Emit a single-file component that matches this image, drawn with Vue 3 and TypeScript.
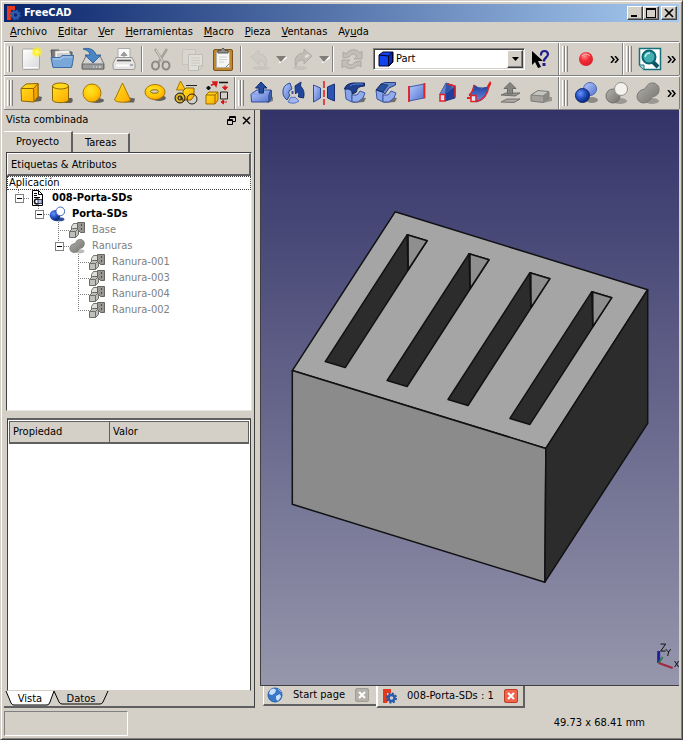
<script setup lang="ts">
import { ref } from 'vue'

interface Tool {
  icon: string
  label: string
  kind?: 'sep' | 'menu' | 'combo'
  disabled?: boolean
}
interface Toolbar {
  name: string
  grow?: boolean
  more?: boolean
  tools: Tool[]
}
interface Row {
  label: string
  icon: string
  guides: string[]
  bold?: boolean
  hidden?: boolean
  open?: boolean
}

const menus = [
  ['A', 'rchivo'],
  ['E', 'ditar'],
  ['V', 'er'],
  ['H', 'erramientas'],
  ['M', 'acro'],
  ['P', 'ieza'],
  ['V', 'entanas'],
]

const sep: Tool = { icon: '', label: '', kind: 'sep' }

const rows: Toolbar[][] = [
  [
    {
      name: 'Archivo',
      grow: true,
      tools: [
        { icon: 'new', label: 'Nuevo' },
        { icon: 'open', label: 'Abrir' },
        { icon: 'save', label: 'Guardar' },
        { icon: 'print', label: 'Imprimir' },
        sep,
        { icon: 'scissors', label: 'Cortar', disabled: true },
        { icon: 'copy', label: 'Copiar', disabled: true },
        { icon: 'paste', label: 'Pegar' },
        sep,
        { icon: 'undo', label: 'Deshacer', kind: 'menu', disabled: true },
        { icon: 'redo', label: 'Rehacer', kind: 'menu', disabled: true },
        sep,
        { icon: 'refresh', label: 'Actualizar', disabled: true },
        { icon: '', label: 'Banco de trabajo', kind: 'combo' },
        { icon: 'help', label: 'Ayuda contextual' },
      ],
    },
    { name: 'Macro', more: true, tools: [{ icon: 'record', label: 'Grabar macro' }] },
    { name: 'Ver', more: true, tools: [{ icon: 'fit', label: 'Ajustar todo' }] },
  ],
  [
    {
      name: 'Sólidos',
      tools: [
        { icon: 'box', label: 'Cubo' },
        { icon: 'cylinder', label: 'Cilindro' },
        { icon: 'sphere', label: 'Esfera' },
        { icon: 'cone', label: 'Cono' },
        { icon: 'torus', label: 'Toro' },
        { icon: 'primitives', label: 'Primitivas' },
        { icon: 'builder', label: 'Constructor de formas' },
      ],
    },
    {
      name: 'Herramientas de pieza',
      grow: true,
      tools: [
        { icon: 'extrude', label: 'Extruir' },
        { icon: 'revolve', label: 'Revolución' },
        { icon: 'mirror', label: 'Simetría' },
        { icon: 'fillet', label: 'Redondeo' },
        { icon: 'chamfer', label: 'Chaflán' },
        { icon: 'ruled', label: 'Superficie reglada' },
        { icon: 'loft', label: 'Proyección' },
        { icon: 'sweep', label: 'Barrido' },
        { icon: 'offset', label: 'Desfase', disabled: true },
        { icon: 'thickness', label: 'Espesor', disabled: true },
      ],
    },
    {
      name: 'Operaciones booleanas',
      more: true,
      tools: [
        { icon: 'boolean', label: 'Booleana' },
        { icon: 'cut', label: 'Cortar', disabled: true },
        { icon: 'fuse', label: 'Unión', disabled: true },
      ],
    },
  ],
]

const tree: Row[] = [
  { label: '008-Porta-SDs', icon: 'doc', guides: ['end'], bold: true, open: true },
  { label: 'Porta-SDs', icon: 'cutresult', guides: ['', 'end'], bold: true, open: true },
  { label: 'Base', icon: 'part', guides: ['', '', 'tee'], hidden: true },
  { label: 'Ranuras', icon: 'fuse', guides: ['', '', 'end'], hidden: true, open: true },
  { label: 'Ranura-001', icon: 'part', guides: ['', '', '', 'tee'], hidden: true },
  { label: 'Ranura-003', icon: 'part', guides: ['', '', '', 'tee'], hidden: true },
  { label: 'Ranura-004', icon: 'part', guides: ['', '', '', 'tee'], hidden: true },
  { label: 'Ranura-002', icon: 'part', guides: ['', '', '', 'end'], hidden: true },
]

const slots = [
  [407, 235],
  [469, 254],
  [530, 273],
  [592, 292],
]

const workbench = ref('Part')
</script>

<template>
  <div class="window">
    <svg class="defs" width="0" height="0" aria-hidden="true">
      <defs>
        <linearGradient id="gold" x1="0" y1="0" x2="1" y2="1">
          <stop offset="0" stop-color="#ffe020" /><stop offset="1" stop-color="#ffa800" />
        </linearGradient>
        <linearGradient id="navy" x1="0" y1="0" x2="1" y2="1">
          <stop offset="0" stop-color="#7da2f2" /><stop offset="1" stop-color="#14389c" />
        </linearGradient>
        <linearGradient id="deep" x1="0" y1="0" x2="0" y2="1">
          <stop offset="0" stop-color="#1c3c9c" /><stop offset="1" stop-color="#6c8ce4" />
        </linearGradient>
        <linearGradient id="pale" x1="0" y1="0" x2="1" y2="1">
          <stop offset="0" stop-color="#b8cbff" /><stop offset="1" stop-color="#5273cc" />
        </linearGradient>
        <linearGradient id="ash" x1="0" y1="0" x2="1" y2="1">
          <stop offset="0" stop-color="#b4b2ac" /><stop offset="1" stop-color="#72716d" />
        </linearGradient>
        <linearGradient id="paper" x1="0" y1="0" x2="1" y2="1">
          <stop offset="0" stop-color="#ffffff" /><stop offset="1" stop-color="#d8d8d8" />
        </linearGradient>
        <radialGradient id="sun">
          <stop offset="0" stop-color="#ffffb0" /><stop offset=".45" stop-color="#ffee20" /><stop offset="1" stop-color="#ffee20" stop-opacity="0" />
        </radialGradient>
        <radialGradient id="goldball" cx=".4" cy=".35" r=".75">
          <stop offset="0" stop-color="#ffe428" /><stop offset=".5" stop-color="#ffcc08" /><stop offset="1" stop-color="#ff9c00" />
        </radialGradient>
        <radialGradient id="blueball" cx=".35" cy=".35" r=".7">
          <stop offset="0" stop-color="#6c94fc" /><stop offset=".5" stop-color="#2452c4" /><stop offset="1" stop-color="#08226c" />
        </radialGradient>
        <radialGradient id="redball" cx=".4" cy=".3" r=".7">
          <stop offset="0" stop-color="#ff9090" /><stop offset=".5" stop-color="#f02c34" /><stop offset="1" stop-color="#dc2028" />
        </radialGradient>
      </defs>

      <symbol id="i-new" viewBox="0 0 24 24">
        <rect x="3.500" y="2" width="17" height="20.500" rx="1" fill="url(#paper)" stroke="#a8a8a6" />
        <path d="M5 4h9M5 20.500h14" stroke="#fff" />
        <circle cx="18" cy="5" r="6" fill="url(#sun)" />
      </symbol>
      <symbol id="i-open" viewBox="0 0 24 24">
        <path d="M1 3h8l1 2h12v14H3z" fill="#77797a" stroke="#555" />
        <path d="M5 4l14-1 2 8H5z" fill="#f2f2f0" stroke="#999" stroke-width=".7" />
        <path d="M7 7h12M7 9h12" stroke="#aaa" />
        <path d="M1 10.500h9l2-2h12l-2.500 12H3z" fill="#78a7d8" stroke="#3a6da8" />
        <path d="M3 12h8l2-2h9" stroke="#b4d0ee" fill="none" />
      </symbol>
      <symbol id="i-save" viewBox="0 0 24 24">
        <path d="M5 9h14l4 8v5H1v-5z" fill="#d4d4d2" stroke="#6e6e6c" />
        <path d="M1.500 17h21v5h-21z" fill="#9c9e9e" stroke="#6e6e6c" />
        <path d="M12 20h1M15 20h1M18 20h2" stroke="#eee" />
        <path d="M2 2c6-2 12 1 13 6h5l-8 8-8-8h5C9 5 6 3 2 2z" fill="#4a86c4" stroke="#1f5590" stroke-width=".8" />
      </symbol>
      <symbol id="i-print" viewBox="0 0 24 24">
        <path d="M6 1.500h12V13H6z" fill="#fafafa" stroke="#aaa" />
        <path d="M12 11V6m-3 2.500L12 5l3 3.500z" fill="#999" stroke="#999" />
        <path d="M4 10.500h16l3 6v4q0 2-2 2H3q-2 0-2-2v-4z" fill="#e4e4e2" stroke="#989896" />
        <path d="M5 13.500h14" stroke="#555" stroke-width="1.500" />
        <path d="M4 18.500h13" stroke="#fff" stroke-width="2" /><path d="M18 18h3" stroke="#777" />
      </symbol>
      <symbol id="i-scissors" viewBox="0 0 24 24">
        <path d="M6 2l9 14M18 2L9 16" stroke="#a5a29b" stroke-width="2.500" fill="none" />
        <path d="M7 3l7 12" stroke="#d9d7d0" />
        <ellipse cx="6.500" cy="18.500" rx="3.500" ry="4" fill="none" stroke="#8d8a84" stroke-width="2" />
        <ellipse cx="17" cy="18.500" rx="3.500" ry="4" fill="none" stroke="#8d8a84" stroke-width="2" />
      </symbol>
      <symbol id="i-copy" viewBox="0 0 24 24">
        <path d="M2.500 2.500h13v15h-13z" fill="#d9d6cf" stroke="#c6c3bc" />
        <path d="M8.500 7.500h14v12l-4 4h-10z" fill="#e0ded8" stroke="#bfbcb5" />
        <path d="M11 11h9M11 13.500h9M11 16h9M11 18.500h6" stroke="#cbc8c1" />
        <path d="M18.500 23v-4h4" fill="none" stroke="#b3b0a9" />
      </symbol>
      <symbol id="i-paste" viewBox="0 0 24 24">
        <rect x="2.500" y="2.500" width="19" height="21" rx="1.500" fill="#c0872e" stroke="#7b531b" />
        <path d="M5.500 5.500h13v15h-13z" fill="#f5f5f3" stroke="#b5b5b0" />
        <path d="M8 10h8M8 12.500h8M8 15h5" stroke="#d2d2d0" />
        <path d="M7 6V3.500h3Q12-1 14 3.500h3V6z" fill="#8e908c" stroke="#555" />
        <path d="M14.500 20.500l4-4" stroke="#888" />
      </symbol>
      <symbol id="i-undo" viewBox="0 0 24 24">
        <path d="M3 10l8-7v4c7 0 9 6 6 14 0-5-2-7-6-7v4z" fill="#cdcac3" stroke="#c4c1ba" />
        <ellipse cx="13" cy="21" rx="9" ry="2" fill="#c8c5be" />
      </symbol>
      <symbol id="i-redo" viewBox="0 0 24 24">
        <path d="M21 9l-8-7v4c-7 0-11 6-8 14 0-5 3-7 8-7v4z" fill="#c0bdb6" stroke="#b0ada6" />
        <path d="M14 10l4-2" stroke="#e3e1dc" stroke-width="2" />
        <ellipse cx="9" cy="21" rx="7" ry="2" fill="#c6c3bc" />
      </symbol>
      <symbol id="i-refresh" viewBox="0 0 24 24">
        <path d="M3 11V5l3 2c4-6 11-5 14-1l2-2v8h-8l3-3c-3-3-6-2-8 1z" fill="#c2bfb8" stroke="#aba8a2" />
        <path d="M21 14v6l-3-2c-4 5-11 4-14 1l-2 2v-8h8l-3 3c3 3 6 2 8-1z" fill="#c2bfb8" stroke="#aba8a2" />
      </symbol>
      <symbol id="i-help" viewBox="0 0 24 24">
        <path d="M3 4v14l3-3 3 6 3-1-3-6h5z" fill="#000" />
        <path d="M12 8.500V7q.5-3 3.500-3T19 7q0 2-2 3.500t-2 4" fill="none" stroke="#1c1c8c" stroke-width="2.200" />
        <path d="M13.500 16h3v3h-3z" fill="#1c1c8c" />
      </symbol>
      <symbol id="i-record" viewBox="0 0 24 24"><circle cx="12" cy="12" r="7" fill="url(#redball)" /><path d="M8 9q4-4 8 0" stroke="#ffb4b4" fill="none" /></symbol>
      <symbol id="i-fit" viewBox="0 0 24 24">
        <path d="M1.500 1.500h21v21H6l-4.500-4.500z" fill="#fff" stroke="#17707c" stroke-width="1.500" />
        <path d="M1.500 18H6v4.500" fill="#b7e2e4" stroke="#17707c" />
        <path d="M14 14l6 6" stroke="#0c5460" stroke-width="4" />
        <circle cx="11" cy="10" r="6.500" fill="#43aeb2" stroke="#0c6470" stroke-width="2" />
        <path d="M7 10q1-4 5-4" stroke="#c4f0f0" stroke-width="1.500" fill="none" />
      </symbol>

      <symbol id="i-box" viewBox="0 0 24 24">
        <path d="M15 21l7-1 1-4-4-1z" fill="#0008" />
        <path d="M2 7.500l5-4.500 12-.5v13L15 21 2.500 20z" fill="url(#gold)" stroke="#8c6400" />
        <path d="M14.500 7.500l4.500-5v13L15 21z" fill="#f4a400" stroke="#8c6400" />
        <path d="M2 7.500h12.500" stroke="#8c6400" />
      </symbol>
      <symbol id="i-cylinder" viewBox="0 0 24 24">
        <path d="M14 22h7q3-2 1-5h-4z" fill="#0008" />
        <path d="M2.500 5v14c0 3.500 16 3.500 16 0V5" fill="url(#gold)" stroke="#8c6400" />
        <ellipse cx="10.500" cy="5" rx="8" ry="3" fill="#ffd81c" stroke="#8c6400" />
      </symbol>
      <symbol id="i-sphere" viewBox="0 0 24 24">
        <ellipse cx="16" cy="19.500" rx="7" ry="2.500" fill="#0008" />
        <circle cx="11" cy="12" r="9" fill="url(#goldball)" stroke="#a87800" />
      </symbol>
      <symbol id="i-cone" viewBox="0 0 24 24">
        <path d="M12 21.500h10l1-4-6-1z" fill="#0008" />
        <path d="M10.500 2L2.500 19c2 3 14 3 16 0z" fill="url(#gold)" stroke="#a87800" />
      </symbol>
      <symbol id="i-torus" viewBox="0 0 24 24">
        <ellipse cx="16" cy="17" rx="7" ry="3" fill="#0008" />
        <ellipse cx="12" cy="11" rx="10" ry="7.500" fill="url(#goldball)" stroke="#a87800" />
        <ellipse cx="11.500" cy="10.500" rx="4" ry="1.800" fill="#d4d0c8" stroke="#8c6400" />
      </symbol>
      <symbol id="i-primitives" viewBox="0 0 24 24">
        <path d="M6.500 0L2.500 9h9z" fill="#ffc414" stroke="#a87800" />
        <path d="M9 10l3-3h8v8l-3 4H9z" fill="url(#gold)" stroke="#8c6400" />
        <path d="M12 4.500h11" stroke="#222" />
        <circle cx="6" cy="17" r="5" fill="#ddb02c" stroke="#111" /><circle cx="6" cy="17" r="2" fill="none" stroke="#111" /><path d="M6 17q3-1 3 3" stroke="#111" fill="none" />
        <circle cx="18" cy="18" r="5" fill="none" stroke="#222" />
      </symbol>
      <symbol id="i-builder" viewBox="0 0 24 24">
        <path d="M1 14l3-3h9v8l-3 4H1z" fill="url(#gold)" stroke="#9c6b00" /><path d="M1 14h9v9M10 14l3-3" stroke="#9c6b00" fill="none" />
        <path d="M1.500 7h4M3.500 5v4" stroke="#111" stroke-width="2" />
        <path d="M6 4.500l5-3M8 1h4l-1 4z" stroke="#d71818" fill="#d71818" stroke-width="1.500" />
        <path d="M14 1.500h9" stroke="#111" stroke-width="1.500" />
        <path d="M20 4v3M17.500 6h5L20 9z" stroke="#d71818" fill="#d71818" />
        <path d="M15.500 11h7v7h-7z" fill="none" stroke="#222" />
        <path d="M22 21h-5M18.500 19v4L16 21z" stroke="#d71818" fill="#d71818" />
      </symbol>

      <symbol id="i-extrude" viewBox="0 0 24 24">
        <path d="M17 22l6-2v-4l-5-1z" fill="#0006" />
        <path d="M1 13l6-4h14l-2 4v8H1.500z" fill="url(#pale)" stroke="#2f4b94" /><path d="M19 13l2.500-4v8L19 21z" fill="#4362b0" stroke="#2f4b94" /><path d="M1 13h18" stroke="#7e98dc" />
        <path d="M9 12V7H5.500L11 1l6 6h-3.500v5z" fill="#244c9c" stroke="#102c6c" />
      </symbol>
      <symbol id="i-revolve" viewBox="0 0 24 24">
        <path d="M9 2Q1 4 2 13q1 4 4 6l3-5q-2-1-1-4l3-2z" fill="url(#pale)" stroke="#2c4a94" />
        <path d="M14 5l6-4-.5 4q5 5 3 12l-5-1q1-4-1-5l-2 2z" fill="#2246a0" stroke="#16316e" />
        <path d="M7 21l3-5q2 1 4 0l4 4q-5 4-11 1z" fill="#9fb4f0" stroke="#5a77be" />
        <path d="M11.500 10v3" stroke="#3a57a8" stroke-width="2" />
      </symbol>
      <symbol id="i-mirror" viewBox="0 0 24 24">
        <path d="M1.500 4l7 3v10l-7 4z" fill="url(#pale)" stroke="#2f4b94" />
        <path d="M15.500 6l7-3v17l-7-3z" fill="#2c54b0" stroke="#182f6e" />
        <path d="M12 0v24" stroke="#dc1a1a" stroke-width="1.500" stroke-dasharray="7 2" />
      </symbol>
      <symbol id="i-fillet" viewBox="0 0 24 24">
        <path d="M9 22l12-1 2-4-6-1z" fill="#0007" />
        <path d="M2 8q4-2 7 2v11l-6-3z" fill="#86a3ec" stroke="#3b57a0" />
        <path d="M9 14h5l3-4 5 2-2 5-5 4H9z" fill="#93acee" stroke="#3b57a0" />
        <path d="M1.500 8q1-5 8-6h12v3q-8 0-8 6l-4 2q0-6-8-5z" fill="#1e408e" stroke="#10265e" />
        <path d="M7 5q2-2 6-2h7" stroke="#5c80d4" fill="none" />
      </symbol>
      <symbol id="i-chamfer" viewBox="0 0 24 24">
        <path d="M9 22l12-1 2-4-6-1z" fill="#0007" />
        <path d="M2 9l7 2v10l-6-3z" fill="#86a3ec" stroke="#3b57a0" />
        <path d="M9 14h5l3-4 5 2-2 5-5 4H9z" fill="#93acee" stroke="#3b57a0" />
        <path d="M2 9l5-6h8l-6 8z" fill="#2a529c" stroke="#10265e" />
        <path d="M7 3l4-1.500h10.500V4L15 7l-4 6-2-2 5-7z" fill="#6888cc" stroke="#24407e" />
      </symbol>
      <symbol id="i-ruled" viewBox="0 0 24 24">
        <path d="M4 6l15-3v14L4 20z" fill="url(#pale)" stroke="#3c5cad" />
        <path d="M4 5v16M19.500 2v15.500" stroke="#e52121" stroke-width="1.800" />
      </symbol>
      <symbol id="i-loft" viewBox="0 0 24 24">
        <path d="M4 13l6-11 9 3v12L9 20z" fill="#1e3d9c" stroke="#253d80" />
        <path d="M10 2l9 3-10 8H4z" fill="#6584cc" /><path d="M10 2l-1 11 5-3 3-6z" fill="#3455a8" />
        <path d="M11 3l8 2v11" stroke="#e52121" stroke-width="1.500" fill="none" />
        <path d="M4 13.500h5v6.500H4z" fill="#d6ddf5" stroke="#e52121" stroke-width="1.500" />
      </symbol>
      <symbol id="i-sweep" viewBox="0 0 24 24">
        <path d="M7 4q-1 8-5 10l7 7q11-2 12-15l-5 1q-5 1-9-3z" fill="url(#deep)" stroke="#304a9a" />
        <path d="M10 20q10-2 12-15M7 4q-1 7-5 10" stroke="#e52121" stroke-width="1.500" fill="none" />
        <path d="M4 14.500h5v6H4z" fill="#e3e7f8" stroke="#e52121" stroke-width="1.500" /><path d="M0 17h4" stroke="#e52121" stroke-width="2" />
        <path d="M21 6l3-5" stroke="#e52121" stroke-width="2.500" />
      </symbol>
      <symbol id="i-offset" viewBox="0 0 24 24">
        <path d="M3 21l6-3h13l-6 3.500z" fill="#aaa8a3" stroke="#75736f" />
        <path d="M3 14l5-2h14l-5 3z" fill="#969590" stroke="#6d6c69" />
        <path d="M9.500 13V7.500H6L12 1.500l6 6h-3.500V13z" fill="#858480" stroke="#6c6b67" />
      </symbol>
      <symbol id="i-thickness" viewBox="0 0 24 24">
        <path d="M14 22l9-2v-4h-5z" fill="#0004" />
        <path d="M2 14v6l12 1.500 6-4V11L9 10z" fill="#a5a39e" stroke="#7b7975" />
        <path d="M2 14l7-4.500 11 1L14 15z" fill="#c6c4be" stroke="#82807c" /><path d="M14 15l6-4v6l-6 4.500z" fill="#8b8985" />
      </symbol>
      <symbol id="i-boolean" viewBox="0 0 24 24">
        <ellipse cx="18" cy="19" rx="6" ry="3" fill="#0005" />
        <circle cx="16" cy="8" r="6.500" fill="url(#pale)" stroke="#4a66b0" />
        <circle cx="8.500" cy="14.500" r="7" fill="url(#blueball)" stroke="#0c2872" />
      </symbol>
      <symbol id="i-cut" viewBox="0 0 24 24">
        <ellipse cx="15" cy="20" rx="7" ry="3" fill="#0004" />
        <circle cx="8" cy="15" r="7" fill="url(#ash)" stroke="#72716d" />
        <circle cx="16" cy="8" r="6.500" fill="#f3f2ef" stroke="#92908b" />
      </symbol>
      <symbol id="i-fuse" viewBox="0 0 24 24">
        <ellipse cx="16" cy="20" rx="7" ry="3" fill="#0004" />
        <path d="M9 8q3-7 9-6 6 2 5 8-1 5-7 6-3 6-9 6-6-1-6-7 1-6 8-7z" fill="url(#ash)" stroke="#7c7b77" />
      </symbol>
      <symbol id="i-cutresult" viewBox="0 0 24 24">
        <ellipse cx="15" cy="20" rx="8" ry="3" fill="#2c4c94" />
        <circle cx="9" cy="14" r="8" fill="url(#blueball)" />
        <circle cx="17" cy="8" r="6.500" fill="#fff" stroke="#466bc0" stroke-width="1.500" />
      </symbol>
      <symbol id="i-part" viewBox="0 0 16 16">
        <path d="M2.500 4.500l2-3h5v6l-2 2h-5z" fill="#deded8" stroke="#747471" />
        <path d="M.5 9.500l3-3h6v6l-3 3h-6z" fill="#c0bfba" stroke="#6c6c68" /><path d="M.5 9.500h6v6m0-6l3-3" fill="none" stroke="#6c6c68" />
        <path d="M8.500.5h7v10h-4l-3-3z" fill="#979692" stroke="#666562" /><path d="M12.500 2v2M12.500 6v2" stroke="#4c4b49" />
      </symbol>
      <symbol id="i-doc" viewBox="0 0 16 16">
        <path d="M3.500.5h6l4 4v11h-10z" fill="#fff" stroke="#000" /><path d="M9.500.5v4h4M5 3.500h3M5 5.500h3M5 7.500h6" stroke="#000" fill="none" />
        <circle cx="8" cy="11.500" r="2.500" fill="none" stroke="#111" stroke-width="1.500" /><path d="M9 9.500h4v4H9z" fill="#b1bff0" stroke="#223" stroke-width=".8" />
      </symbol>
      <symbol id="i-freecad" viewBox="0 0 16 16">
        <path d="M2 1h8v4H6v2h3v4H6v4H2z" fill="#e33a1e" />
        <circle cx="10.500" cy="10" r="4.500" fill="none" stroke="#24509c" stroke-width="2" stroke-dasharray="2 1.500" /><circle cx="10.500" cy="10" r="3" fill="none" stroke="#2c5cb0" stroke-width="2.500" />
      </symbol>
      <symbol id="i-globe" viewBox="0 0 16 16">
        <circle cx="8" cy="8" r="7" fill="#3978c8" stroke="#285fa8" /><path d="M3 3q4-3 6 0L8 6 5 8 2 7zM9 9l4-2 1 3-3 4-2-2z" fill="#c8e0fa" /><path d="M11 2l3 3" stroke="#8db7eb" />
      </symbol>
    </svg>

    <header class="titlebar">
      <svg class="i16" aria-hidden="true"><use href="#i-freecad" /></svg>
      <h1>FreeCAD</h1>
      <div class="winbtns">
        <button type="button" aria-label="Minimizar"><svg viewBox="0 0 12 10"><path d="M2 7h6v2H2z" /></svg></button>
        <button type="button" aria-label="Maximizar"><svg viewBox="0 0 12 10"><path d="M1 0h10v10H1zM2 2v7h8V2z" fill-rule="evenodd" /></svg></button>
        <button type="button" class="close" aria-label="Cerrar"><svg viewBox="0 0 12 10"><path d="M2 1l8 8M10 1L2 9" stroke="#000" stroke-width="1.700" /></svg></button>
      </div>
    </header>

    <nav class="menubar" aria-label="Menú principal">
      <button v-for="m in menus" :key="m[1]" type="button"><u>{{ m[0] }}</u>{{ m[1] }}</button>
      <button type="button">Ay<u>u</u>da</button>
    </nav>

    <div v-for="(bars, r) in rows" :key="r" class="toolrow">
      <div v-for="bar in bars" :key="bar.name" class="toolbar" :class="{ grow: bar.grow }" role="toolbar" :aria-label="bar.name">
        <span class="grip"></span>
        <template v-for="(t, i) in bar.tools" :key="i">
          <span v-if="t.kind === 'sep'" class="sep"></span>
          <div v-else-if="t.kind === 'combo'" class="combo">
            <select v-model="workbench" :aria-label="t.label">
              <option>Part</option>
            </select>
            <svg class="cube" viewBox="0 0 16 16" aria-hidden="true">
              <path d="M1 4l4-3h10v10l-4 4H1z" fill="#1144ee" stroke="#000020" /><path d="M10.500 5l4-4v10l-4 4z" fill="#0a2ab4" stroke="#000020" /><path d="M1 4l9.500 1" stroke="#000020" />
            </svg>
            <span class="drop"><svg viewBox="0 0 7 4"><path d="M0 0h7L3.500 4z" /></svg></span>
          </div>
          <template v-else>
            <button type="button" class="tool" :aria-label="t.label" :disabled="t.disabled">
              <svg class="i24"><use :href="'#i-' + t.icon" /></svg>
            </button>
            <button v-if="t.kind === 'menu'" type="button" class="arrow" :aria-label="t.label + ': lista'" disabled>
              <svg viewBox="0 0 11 7"><path d="M2 7l8-6" transform="translate(1 0)" stroke="#fff" stroke-width="1.500" /><path d="M0 0h10L5 6z" fill="#807d78" /></svg>
            </button>
          </template>
        </template>
        <button v-if="bar.more" type="button" class="more" aria-label="Más">
          <svg viewBox="0 0 9 7"><path d="M1 0l3 3.500L1 7M5 0l3 3.500L5 7" fill="none" stroke="#000" stroke-width="1.500" /></svg>
        </button>
      </div>
    </div>

    <main class="work">
      <aside class="dock">
        <div class="docktitle">
          <h2>Vista combinada</h2>
          <button type="button" aria-label="Desacoplar"><svg viewBox="0 0 9 9"><path d="M2.500 3V.5h6v5H6M2 1.500h7" fill="none" stroke="#000" /><path d="M.5 3.500h5v5h-5zM0 4.500h6" fill="none" stroke="#000" /></svg></button>
          <button type="button" aria-label="Cerrar panel"><svg viewBox="0 0 9 9"><path d="M1 1l7 7M8 1L1 8" stroke="#000" stroke-width="1.500" /></svg></button>
        </div>
        <div class="tabs" role="tablist">
          <button type="button" role="tab" class="on" aria-selected="true">Proyecto</button>
          <button type="button" role="tab" aria-selected="false">Tareas</button>
        </div>
        <section class="treebox">
          <div class="colhead">Etiquetas &amp; Atributos</div>
          <div class="root">Aplicación</div>
          <ul class="tree">
            <li v-for="row in tree" :key="row.label" :class="{ bold: row.bold, dim: row.hidden }">
              <span v-for="(g, i) in row.guides" :key="i" class="guide" :class="g">
                <button v-if="row.open && i === row.guides.length - 1" type="button" class="expander" :aria-label="'Contraer ' + row.label"></button>
              </span>
              <svg class="i16" aria-hidden="true"><use :href="'#i-' + row.icon" /></svg>
              <span class="name">{{ row.label }}</span>
            </li>
          </ul>
        </section>
        <section class="props">
          <table>
            <thead>
              <tr><th scope="col" class="prop">Propiedad</th><th scope="col">Valor</th></tr>
            </thead>
          </table>
        </section>
        <div class="bottomtabs" role="tablist">
          <button type="button" role="tab" class="on" aria-selected="true">
            <svg viewBox="0 0 48 16" preserveAspectRatio="none"><path d="M0 0l5 12q1 2 3 2h33q2 0 3-3L48 0" fill="#fff" stroke="#000" /></svg><span>Vista</span>
          </button>
          <button type="button" role="tab" aria-selected="false">
            <svg viewBox="0 0 54 16" preserveAspectRatio="none"><path d="M0 0l5 11q1 2 3 2h38q2 0 3-2L54 0" fill="#d4d0c8" stroke="#000" /></svg><span>Datos</span>
          </button>
        </div>
      </aside>

      <section class="mdi">
        <div class="viewport">
          <svg viewBox="261 110 418 576" role="img" aria-label="Vista 3D de Porta-SDs">
            <g stroke="#111114" stroke-width="1.500" stroke-linejoin="round">
              <path d="M395 212L648 290L546 449L292 371Z" fill="#a5a5a5" />
              <path d="M292 371L546 449L545 583L292 505Z" fill="#8b8b8b" />
              <path d="M648 290V424L545 583L546 449Z" fill="#2c2c2c" />
              <g v-for="s in slots" :key="s[0]" :transform="`translate(${s[0]} ${s[1]})`">
                <path d="M0 0L20 6L-62 133L-82 127Z" fill="#2c2c2c" />
                <path d="M0 0L20 6L1 35Z" fill="#8f8f8f" />
                <path d="M1 0V35" />
              </g>
            </g>
            <g fill="none">
              <path d="M659 664V652" stroke="#20209c" stroke-width="3" />
              <path d="M659 664L663 658" stroke="#2c7c4c" stroke-width="2" />
              <path d="M659 664L673 669" stroke="#a02840" stroke-width="2" />
              <path d="M661 645h5l-5 7h5M666 650l3 3l2-3M669 653l-1 4M675 662l4 6M679 662l-4 6" stroke="#111" />
            </g>
          </svg>
        </div>
        <div class="doctabs" role="tablist">
          <div class="doctab">
            <svg class="i16" aria-hidden="true"><use href="#i-globe" /></svg>
            <button type="button" role="tab" class="label" aria-selected="false">Start page</button>
            <button type="button" class="x" aria-label="Cerrar Start page"><svg viewBox="0 0 8 8"><path d="M1 1l6 6M7 1L1 7" /></svg></button>
          </div>
          <div class="doctab on">
            <svg class="i16" aria-hidden="true"><use href="#i-freecad" /></svg>
            <button type="button" role="tab" class="label" aria-selected="true">008-Porta-SDs : 1</button>
            <button type="button" class="x" aria-label="Cerrar 008-Porta-SDs"><svg viewBox="0 0 8 8"><path d="M1 1l6 6M7 1L1 7" /></svg></button>
          </div>
        </div>
      </section>
    </main>

    <footer class="status">
      <div class="message"></div>
      <output>49.73 x 68.41 mm</output>
    </footer>
  </div>
</template>

<style>
body {
  margin: 0;
  background: #d4d0c8;
}
</style>

<style scoped>
.window,
.window * {
  box-sizing: border-box;
}
.window {
  display: flex;
  flex-direction: column;
  height: 100vh;
  min-height: 480px;
  padding: 3px 3px 1px;
  background: #d4d0c8;
  border: 1px solid #d4d0c8;
  border-right-color: #404040;
  border-bottom-color: #404040;
  box-shadow: inset 1px 1px #fff, inset -1px -1px #808080;
  color: #000;
  font-family: 'DejaVu Sans Condensed', 'DejaVu Sans', sans-serif;
  font-size: 11px;
  line-height: 16px;
}
.defs {
  display: block;
  flex: none;
}
button {
  font: inherit;
  color: inherit;
  padding: 0;
  margin: 0;
  border: 0;
  background: none;
}
h1,
h2 {
  margin: 0;
  font-size: 11px;
}
.i16 {
  width: 16px;
  height: 16px;
  flex: none;
}
.i24 {
  width: 24px;
  height: 24px;
}

.titlebar {
  display: flex;
  align-items: center;
  gap: 3px;
  height: 18px;
  padding: 0 2px 0 1px;
  background: linear-gradient(90deg, #0a246a, #a6caf0);
  color: #fff;
}
.titlebar h1 {
  flex: 1;
}
.winbtns {
  display: flex;
}
.winbtns button {
  display: grid;
  place-items: center;
  width: 16px;
  height: 14px;
  background: #d4d0c8;
  border: 1px solid #fff;
  border-right-color: #404040;
  border-bottom-color: #404040;
  box-shadow: inset -1px -1px #808080;
}
.winbtns svg {
  width: 12px;
  height: 10px;
}
.winbtns .close {
  margin-left: 2px;
}

.menubar {
  display: flex;
  gap: 11px;
  height: 20px;
  padding: 0 6px;
  border-bottom: 1px solid #808080;
}

.toolrow {
  display: flex;
  height: 34px;
  border-top: 1px solid #fff;
  border-bottom: 1px solid #808080;
}
.toolbar {
  display: flex;
  align-items: center;
  padding: 0 2px;
  border-left: 1px solid #fff;
  border-right: 1px solid #808080;
}
.toolbar.grow {
  flex: 1;
}
.grip {
  width: 6px;
  height: 26px;
  margin-right: 2px;
  flex: none;
  background: linear-gradient(90deg, #fff 1px, #d4d0c8 1px, #d4d0c8 2px, #808080 2px, #808080 3px, #fff 3px, #fff 4px, #d4d0c8 4px, #d4d0c8 5px, #808080 5px);
}
.tool {
  display: grid;
  place-items: center;
  width: 31px;
  height: 30px;
  flex: none;
}
.arrow {
  display: grid;
  place-items: center;
  width: 12px;
  height: 30px;
}
.arrow svg {
  width: 11px;
  height: 7px;
}
.sep {
  width: 2px;
  height: 26px;
  margin: 0 2px;
  border-left: 1px solid #808080;
  border-right: 1px solid #fff;
}
.more {
  display: grid;
  place-items: center;
  width: 12px;
  height: 30px;
}
.toolbar:not(:last-child) .more {
  margin-left: 7px;
}
.tool + .tool + .more {
  margin-left: 2px;
}
.more svg {
  width: 9px;
  height: 7px;
}
.combo {
  display: grid;
  width: 152px;
  height: 22px;
  margin-left: 6px;
  align-items: center;
  background: #fff;
  border: 1px solid #808080;
  border-right-color: #fff;
  border-bottom-color: #fff;
  box-shadow: inset 1px 1px #404040, inset -1px -1px #d4d0c8;
}
.combo > * {
  grid-area: 1 / 1;
}
.combo select {
  width: 100%;
  height: 20px;
  padding: 0 22px;
  appearance: none;
  border: 0;
  background: transparent;
  color: #000;
  font: inherit;
}
.cube {
  width: 16px;
  height: 16px;
  margin-left: 4px;
  pointer-events: none;
}
.drop {
  justify-self: end;
  display: grid;
  place-items: center;
  width: 16px;
  height: 18px;
  margin-right: 1px;
  pointer-events: none;
  background: #d4d0c8;
  border: 1px solid #fff;
  border-right-color: #404040;
  border-bottom-color: #404040;
  box-shadow: inset -1px -1px #808080;
}
.drop svg {
  width: 7px;
  height: 4px;
}

.work {
  flex: 1;
  min-height: 0;
  display: flex;
  gap: 5px;
}
.dock {
  display: flex;
  flex-direction: column;
  width: 251px;
  flex: none;
  border-right: 1px solid #404040;
  border-bottom: 2px solid #606060;
}
.docktitle {
  display: flex;
  align-items: center;
  gap: 6px;
  height: 20px;
  padding: 0 3px 0 2px;
}
.docktitle h2 {
  flex: 1;
  font-weight: normal;
}
.docktitle button,
.docktitle svg {
  display: block;
  width: 9px;
  height: 9px;
}
.tabs {
  display: flex;
  align-items: flex-end;
  height: 22px;
}
.tabs button {
  height: 19px;
  padding: 0 12px;
  border: 1px solid #fff;
  border-left: 0;
  border-right: 2px solid #606060;
  border-bottom: 0;
}
.tabs .on {
  height: 21px;
}
.treebox {
  flex: 260 1 0;
  margin: 0 2px 0 2px;
  border: 1px solid #404040;
  border-right-color: #e8e6e0;
  border-bottom-color: #e8e6e0;
  background: #fff;
  overflow: auto;
}
.colhead {
  height: 23px;
  padding: 0 3px;
  line-height: 22px;
  background: #d4d0c8;
  border: 1px solid #fff;
  border-right: 2px solid #606060;
  border-bottom: 2px solid #606060;
}
.root {
  height: 14px;
  padding: 0 1px;
  line-height: 12px;
  border: 1px dotted #404040;
}
.tree {
  list-style: none;
  margin: 0;
  padding: 0 0 0 2px;
}
.tree li {
  display: flex;
  align-items: center;
  height: 16px;
}
.bold {
  font-weight: bold;
}
.dim {
  color: #808080;
}
.guide {
  display: grid;
  place-items: center;
  width: 20px;
  height: 16px;
  flex: none;
}
.tee,
.end {
  background-repeat: no-repeat;
  background-image: repeating-linear-gradient(90deg, #808080 0 1px, transparent 1px 2px), repeating-linear-gradient(#808080 0 1px, transparent 1px 2px);
  background-position: 9px 8px, 9px 0;
  background-size: 11px 1px, 1px 16px;
}
.end {
  background-size: 11px 1px, 1px 8px;
}
.expander {
  width: 9px;
  height: 9px;
  background: linear-gradient(#000, #000) center / 5px 1px no-repeat #fff;
  border: 1px solid #808080;
}
.name {
  padding-left: 7px;
}
.props {
  flex: 272 1 0;
  margin: 7px 3px 0;
  padding: 1px;
  border: 1px solid #404040;
  border-top: 2px solid #606060;
  border-bottom-color: #d4d0c8;
  background: #fff;
}
.props table {
  width: 100%;
  border-collapse: collapse;
  table-layout: fixed;
}
.props th {
  height: 22px;
  padding: 1px 3px 0;
  font-weight: normal;
  text-align: left;
  background: #d4d0c8;
  border: 1px solid #606060;
  border-bottom-width: 2px;
}
.props .prop {
  width: 100px;
}
.bottomtabs {
  display: flex;
  align-items: flex-start;
  height: 15px;
  padding-left: 2px;
}
.bottomtabs button {
  display: grid;
  height: 15px;
}
.bottomtabs button > * {
  grid-area: 1 / 1;
}
.bottomtabs svg {
  width: 100%;
  height: 16px;
  overflow: visible;
}
.bottomtabs span {
  padding: 0 11px;
}

.mdi {
  flex: 1;
  min-width: 0;
  display: flex;
  flex-direction: column;
}
.viewport {
  flex: 1;
  min-height: 0;
  background: linear-gradient(#333369, #9696ac);
  border-left: 1px solid #404040;
  border-bottom: 1px solid #404040;
}
.viewport svg {
  display: block;
  width: 100%;
  height: 100%;
}
.doctabs {
  display: flex;
  align-items: flex-start;
  height: 22px;
  padding-left: 3px;
}
.doctab {
  display: flex;
  align-items: center;
  height: 20px;
  padding: 0 7px 0 3px;
  border-left: 1px solid #fff;
  border-bottom: 2px solid #606060;
}
.doctab.on {
  height: 22px;
  border-right: 2px solid #606060;
  border-left-width: 2px;
  padding-right: 5px;
}
.doctab .label {
  padding: 0 10px;
}
.x {
  display: grid;
  place-items: center;
  width: 14px;
  height: 14px;
  border: 1px solid #a09d97;
  border-radius: 2px;
  background: #b4b1aa;
}
.on .x {
  border-color: #c23a24;
  background: #ee6650;
}
.x svg {
  width: 8px;
  height: 8px;
  stroke: #fff;
  stroke-width: 2;
}

.status {
  display: flex;
  align-items: center;
  justify-content: space-between;
  height: 30px;
  padding-right: 34px;
}
.message {
  width: 124px;
  height: 25px;
  border: 1px solid #808080;
  border-right-color: #fff;
  border-bottom-color: #fff;
}
</style>
